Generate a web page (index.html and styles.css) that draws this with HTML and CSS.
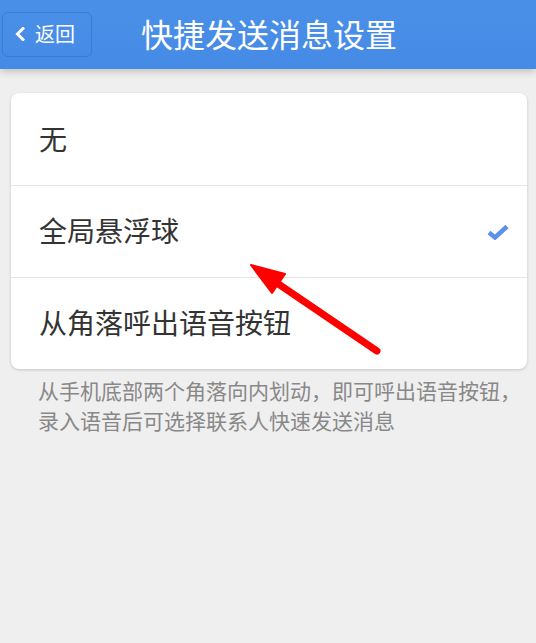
FILE: index.html
```html
<!DOCTYPE html>
<html lang="zh-CN">
<head>
<meta charset="utf-8">
<link rel="stylesheet" href="styles.css">
</head>
<body>
<div class="page">
  <header class="topbar">
    <div class="back">
      <svg class="chev" width="10" height="14" viewBox="0 0 10 14"><path d="M8 1.5 L2.5 7 L8 12.5" fill="none" stroke="#fff" stroke-width="3" stroke-linecap="square"/></svg>
      <span>返回</span>
    </div>
    <h1 class="title">快捷发送消息设置</h1>
  </header>
  <main class="content">
    <div class="card">
      <div class="row">无</div>
      <div class="row">全局悬浮球
        <svg class="check" width="22" height="16" viewBox="0 0 22 16"><path d="M2 8.5 L8 13.5 L20 2.5" fill="none" stroke="#5b8ff0" stroke-width="4.5" stroke-linejoin="miter"/></svg>
      </div>
      <div class="row">从角落呼出语音按钮</div>
    </div>
    <p class="desc">从手机底部两个角落向内划动，即可呼出语音按钮，<br>录入语音后可选择联系人快速发送消息</p>
  </main>
  <svg class="arrow" width="536" height="643" viewBox="0 0 536 643">
    <line x1="377" y1="351" x2="274" y2="281" stroke="#f00" stroke-width="7" stroke-linecap="round"/>
    <polygon points="251,265 285,274 272,293" fill="#f00" stroke="#f00" stroke-width="2" stroke-linejoin="round"/>
  </svg>
</div>
</body>
</html>
```
FILE: styles.css
```css
html, body {
  margin: 0;
  padding: 0;
}
body {
  background: #efefef;
  font-family: "Noto Sans CJK SC", "Noto Sans", sans-serif;
}
.page {
  position: relative;
  width: 536px;
  height: 643px;
  overflow: hidden;
}
.topbar {
  height: 69px;
  background: linear-gradient(#4a8fe8, #458ae4);
  display: flex;
  align-items: center;
  box-shadow: 0 2px 8px rgba(0,0,0,0.22);
  position: relative;
  z-index: 1;
}
.back {
  margin-left: 2px;
  margin-top: -1px;
  width: 88px;
  height: 43px;
  border: 1px solid #3c7bd4;
  border-radius: 6px;
  display: flex;
  align-items: center;
  color: #fff;
  font-size: 20px;
  box-sizing: content-box;
}
.chev {
  margin-left: 12px;
  margin-right: 10px;
}
.back span {
  line-height: 1;
}
.title {
  margin: -3px 0 0 49px;
  color: #fff;
  font-size: 32px;
  font-weight: normal;
  line-height: 1;
}
.content {
  padding: 24px 9px 0 11px;
}
.card {
  background: #fff;
  border-radius: 8px;
  box-shadow: 0 1px 3px rgba(0,0,0,0.18);
}
.row {
  height: 92px;
  display: flex;
  align-items: center;
  padding-left: 28px;
  padding-right: 18px;
  padding-bottom: 3px;
  font-size: 28px;
  color: #333;
  border-top: 1px solid #e6e6e6;
  box-sizing: border-box;
}
.row:first-child {
  border-top: none;
}
.check {
  margin-left: auto;
  margin-top: 3px;
}
.desc {
  margin: 6px 0 0 27px;
  font-size: 21px;
  line-height: 30px;
  color: #888;
}
.arrow {
  position: absolute;
  left: 0;
  top: 0;
  z-index: 2;
  pointer-events: none;
}
```
